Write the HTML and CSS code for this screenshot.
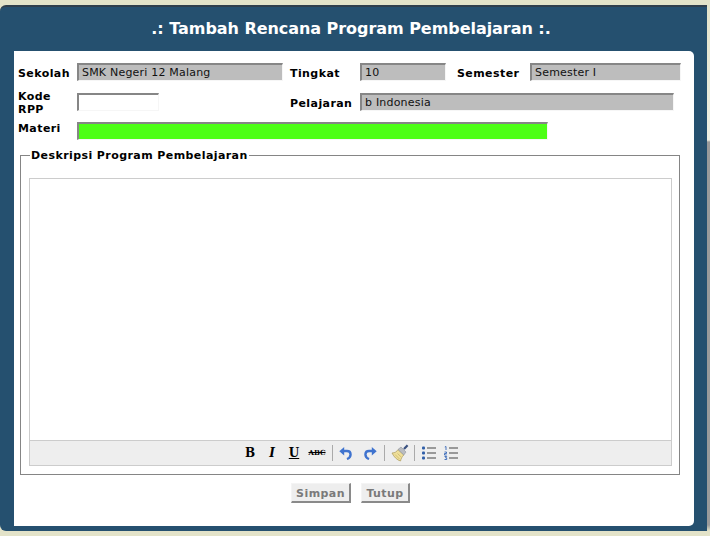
FILE: index.html
```html
<!DOCTYPE html>
<html lang="id">
<head>
<meta charset="utf-8">
<title>Tambah Rencana Program Pembelajaran</title>
<link rel="stylesheet" href="styles.css">
</head>
<body>
<div class="window">
  <h1 class="title">.: Tambah Rencana Program Pembelajaran :.</h1>
  <div class="panel">
    <div class="row row-first">
      <label class="lbl lbl-first">Sekolah</label>
      <div class="field f-sekolah">SMK Negeri 12 Malang</div>
      <label class="lbl lbl-tingkat">Tingkat</label>
      <div class="field f-tingkat">10</div>
      <label class="lbl lbl-semester">Semester</label>
      <div class="field f-semester">Semester I</div>
    </div>
    <div class="row row-second">
      <label class="lbl lbl-first">Kode RPP</label>
      <div class="field field-empty f-kode"></div>
      <label class="lbl lbl-pelajaran">Pelajaran</label>
      <div class="field f-pelajaran">b Indonesia</div>
    </div>
    <div class="row row-third">
      <label class="lbl lbl-first lbl-materi">Materi</label>
      <div class="field field-green f-materi"></div>
    </div>
    <fieldset class="desc">
      <legend class="legend">Deskripsi Program Pembelajaran</legend>
      <div class="editor">
        <div class="editor-area"></div>
        <div class="toolbar">
          <span class="tb tb-b">B</span>
          <span class="tb tb-i">I</span>
          <span class="tb tb-u">U</span>
          <span class="tb tb-s">ABC</span>
          <span class="sep"></span>
          <svg class="ico" width="14" height="14" viewBox="0 0 14 14"><path d="M4 5 H8 C12.5 5 13 11 8 13" fill="none" stroke="#3f73cf" stroke-width="2.4"/><path d="M0.3 5.2 L5.2 1 V9.4 Z" fill="#3f73cf"/></svg>
          <svg class="ico ico-redo" width="14" height="14" viewBox="0 0 14 14"><path d="M10 5 H6 C1.5 5 1 11 6 13" fill="none" stroke="#3f73cf" stroke-width="2.4"/><path d="M13.7 5.2 L8.8 1 V9.4 Z" fill="#3f73cf"/></svg>
          <span class="sep sep-b"></span>
          <svg class="ico" width="18" height="18" viewBox="0 0 18 18"><path d="M1 9 C4 9 6 7.5 7 5.5 L12.8 11 C11 12.5 10 15 9.5 17 C6 16 3 13 1 9 Z" fill="#efdf9a" stroke="#b3a265" stroke-width=".8"/><path d="M4 10.5 L8.5 15 M6.5 9.5 L10.2 13" stroke="#cdb768" stroke-width=".8"/><path d="M7 5.5 L10 3 L15 8 L12.8 11 Z" fill="#b9bcc2" stroke="#83868e" stroke-width=".5"/><path d="M13 5 L16.6 1.2" stroke="#39507f" stroke-width="2.2"/></svg>
          <span class="sep sep-c"></span>
          <svg class="ico" width="14" height="14" viewBox="0 0 14 14"><g fill="#2f5ea8"><rect x="0" y="0.5" width="3" height="3" rx="1"/><rect x="0" y="5.5" width="3" height="3" rx="1"/><rect x="0" y="10.5" width="3" height="3" rx="1"/></g><path d="M5 2 H14 M5 7 H14 M5 12 H14" stroke="#444" stroke-width="1"/></svg>
          <svg class="ico ico-ol" width="14" height="14" viewBox="0 0 14 14"><g fill="none" stroke="#3568b8" stroke-width=".9"><path d="M.8 1 L2 .5 V4"/><path d="M.5 6 H2.5 V7.5 H.5 V9 H2.7"/><path d="M.5 10.5 H2.7 L1.5 11.8 H2.7 V13.5 H.5"/></g><path d="M5 2 H14 M5 7 H14 M5 12 H14" stroke="#444" stroke-width="1"/></svg>
        </div>
      </div>
    </fieldset>
    <div class="actions">
      <button class="btn btn-simpan" type="button">Simpan</button>
      <button class="btn btn-tutup" type="button">Tutup</button>
    </div>
  </div>
</div>
<div class="edge"></div>
</body>
</html>
```
FILE: styles.css
```css
* { box-sizing: border-box; }
html, body { margin: 0; padding: 0; }
body {
  width: 710px;
  height: 536px;
  overflow: hidden;
  display: flex;
  align-items: flex-start;
  background: #e3e3c9;
  font-family: "DejaVu Sans", Verdana, sans-serif;
  font-size: 11px;
  color: #000;
}
.window {
  flex: none;
  margin-top: 5px;
  width: 707px;
  height: 526px;
  background: #25506f;
  border-top: 2px solid #2f3f4c;
  border-radius: 6px 0 0 6px;
  padding: 0 13px 0 14px;
  display: flex;
  flex-direction: column;
}
.edge {
  flex: none;
  width: 3px;
  height: 536px;
  background: linear-gradient(#e3e3c9 0, #efefe2 140px, #9a9a9a 142px, #9a9a9a 525px, #e3e3c9 531px);
}
.title {
  margin: 0;
  height: 44px;
  padding: 11px 6px 0 0;
  text-align: center;
  color: #fff;
  font-size: 16px;
  line-height: 22px;
  font-weight: bold;
  letter-spacing: -0.05px;
}
.panel {
  width: 680px;
  height: 475px;
  background: #fff;
  border-radius: 0 5px 5px 0;
  padding: 12px 0 0 4px;
}
.row { display: flex; align-items: center; }
.row-first { height: 18px; }
.row-second { height: 18px; margin-top: 12px; }
.row-third { height: 18px; margin-top: 11px; }
.lbl { font-weight: bold; line-height: 13px; flex: none; letter-spacing: 0.42px; position: relative; top: 1px; }
.lbl-first { width: 59px; padding-right: 15px; }
.lbl-materi { top: -3px; }
.lbl-tingkat { margin-left: 7px; width: 70px; }
.lbl-pelajaran { margin-left: 131px; width: 70px; }
.lbl-semester { margin-left: 11px; width: 73px; }
.field {
  flex: none;
  height: 18px;
  background: #bdbdbd;
  border-style: solid;
  border-width: 2px 1px 1px 2px;
  border-color: #868686 #f6f6f6 #f6f6f6 #868686;
  padding-left: 3px;
  line-height: 16px;
  letter-spacing: 0.2px;
  color: #111;
}
.field-empty { background: #fff; }
.field-green { background: #4dff16; }
.f-sekolah { width: 206px; }
.f-tingkat { width: 86px; }
.f-semester { width: 151px; }
.f-kode { width: 82px; }
.f-pelajaran { width: 314px; }
.f-materi { width: 471px; }
.desc {
  display: block;
  margin: 9px 0 0 2px;
  padding: 16px 8px 8px 8px;
  width: 660px;
  height: 326px;
  border: 1px solid #858585;
  min-width: 0;
}
.legend {
  padding: 0 1px;
  margin-left: 1px;
  font-weight: bold;
  line-height: 13px;
  letter-spacing: 0.42px;
}
.editor {
  width: 643px;
  height: 288px;
  border: 1px solid #cccccc;
  display: flex;
  flex-direction: column;
}
.editor-area { flex: 1; background: #fff; }
.toolbar {
  height: 25px;
  background: #eeeeee;
  border-top: 1px solid #cccccc;
  display: flex;
  align-items: center;
  padding-left: 209px;
}
.tb {
  flex: none;
  width: 22px;
  text-align: center;
  font-family: "DejaVu Serif", serif;
  font-weight: bold;
  font-size: 12px;
  line-height: 16px;
}
.tb-i { font-style: italic; }
.tb-u { text-decoration: underline; }
.tb-s { font-size: 7px; width: 24px; text-decoration: line-through; }
.sep { flex: none; width: 1px; height: 16px; background: #aaa; margin: 0 6px 0 3px; }
.ico { flex: none; display: block; }
.ico-redo { margin-left: 10px; }
.sep-b { margin-left: 7px; }
.sep-c { margin-left: 5px; margin-right: 7px; }
.ico-ol { margin-left: 8px; }
.actions {
  display: flex;
  gap: 10px;
  padding-left: 273px;
  margin-top: 8px;
}
.btn {
  height: 20px;
  padding: 2px 0 0 0;
  background: #eeeeee;
  border-style: solid;
  border-width: 1px 2px 2px 1px;
  border-color: #f4f4f4 #8a8a8a #8a8a8a #f4f4f4;
  font: bold 11px "DejaVu Sans", Verdana, sans-serif;
  letter-spacing: 0.42px;
  color: #7a7a7a;
}
.btn-simpan { width: 60px; }
.btn-tutup { width: 49px; }
```
